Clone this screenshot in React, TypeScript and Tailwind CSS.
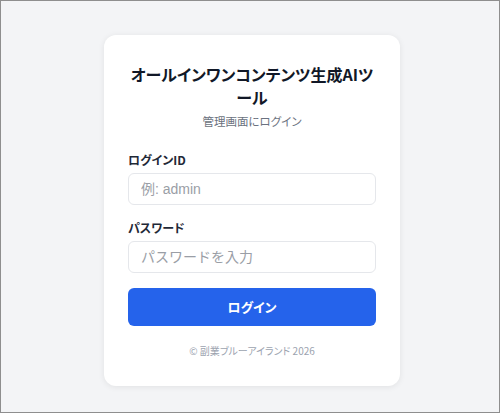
export default function App() {
  const inputCls =
    "mt-[5px] block h-[32px] w-full rounded-md border border-[#e5e7eb] px-3 font-['Liberation_Sans','Noto_Sans_CJK_JP',sans-serif] text-[14px] text-[#111827] outline-none [font-feature-settings:normal] placeholder:text-[#9a9ea6]"

  return (
    <div
      className="box-border flex h-[413px] w-[500px] justify-center border border-[#8e8e8e] bg-[#f3f4f6] pl-[4px] pt-[34px]"
      style={{ fontFamily: '"Noto Sans CJK JP", "Noto Sans", sans-serif' }}
    >
      <div className="h-[351px] w-[296px] rounded-xl bg-white px-6 pt-[28px] shadow-[0_1px_6px_rgba(0,0,0,0.08)] [font-feature-settings:'palt']">
        <h1 className="text-center text-[16px] font-bold leading-[23px] text-[#111827]">
          オールインワンコンテンツ生成AIツール
        </h1>
        <p className="mt-[4px] text-center text-[11.5px] leading-[16px] text-[#6b7280]">管理画面にログイン</p>

        <form className="mt-[23px]" onSubmit={(e) => e.preventDefault()}>
          <label className="block text-[12px] font-bold leading-[16px] text-[#1f2937]">ログインID</label>
          <input type="text" placeholder="例: admin" className={inputCls} />

          <label className="mt-[15px] block text-[12px] font-bold leading-[16px] text-[#1f2937]">パスワード</label>
          <input type="password" placeholder="パスワードを入力" className={inputCls} />

          <button
            type="submit"
            className="mt-[15px] block h-[38px] w-full rounded-md bg-[#2563eb] text-[13px] font-bold text-white"
          >
            ログイン
          </button>
        </form>

        <p className="mt-[18px] text-center text-[10px] leading-[14px] text-[#9ca3af]">© 副業ブルーアイランド 2026</p>
      </div>
    </div>
  )
}
